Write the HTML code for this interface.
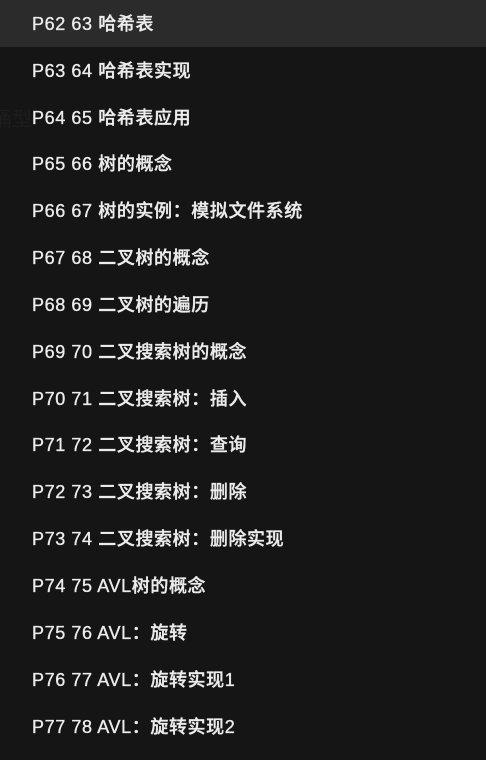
<!DOCTYPE html>
<html><head><meta charset="utf-8"><style>
html,body{margin:0;padding:0;}
body{width:486px;height:760px;background:#151515;overflow:hidden;position:relative;font-family:"Liberation Sans","Noto Sans CJK SC",sans-serif;}
.row{position:absolute;left:0;width:486px;height:47px;line-height:48px;color:#ececec;font-size:18px;font-weight:500;letter-spacing:0.6px;-webkit-text-stroke:0.35px #ececec;padding-left:32px;box-sizing:border-box;white-space:nowrap;}
.hl{background:#2b2b2b;}
.ghost{position:absolute;left:-8px;top:104px;line-height:28px;font-size:20px;color:#1d1d1d;font-family:"Noto Sans CJK SC",sans-serif;}
</style></head><body>
<div class="ghost">桶型</div>
<div class="row hl" style="top:0">P62 63 哈希表</div>
<div class="row" style="top:47px">P63 64 哈希表实现</div>
<div class="row" style="top:94px">P64 65 哈希表应用</div>
<div class="row" style="top:140px">P65 66 树的概念</div>
<div class="row" style="top:187px">P66 67 树的实例：模拟文件系统</div>
<div class="row" style="top:234px">P67 68 二叉树的概念</div>
<div class="row" style="top:281px">P68 69 二叉树的遍历</div>
<div class="row" style="top:328px">P69 70 二叉搜索树的概念</div>
<div class="row" style="top:375px">P70 71 二叉搜索树：插入</div>
<div class="row" style="top:421px">P71 72 二叉搜索树：查询</div>
<div class="row" style="top:468px">P72 73 二叉搜索树：删除</div>
<div class="row" style="top:515px">P73 74 二叉搜索树：删除实现</div>
<div class="row" style="top:562px">P74 75 AVL树的概念</div>
<div class="row" style="top:609px">P75 76 AVL：旋转</div>
<div class="row" style="top:656px">P76 77 AVL：旋转实现1</div>
<div class="row" style="top:703px">P77 78 AVL：旋转实现2</div>
</body></html>
